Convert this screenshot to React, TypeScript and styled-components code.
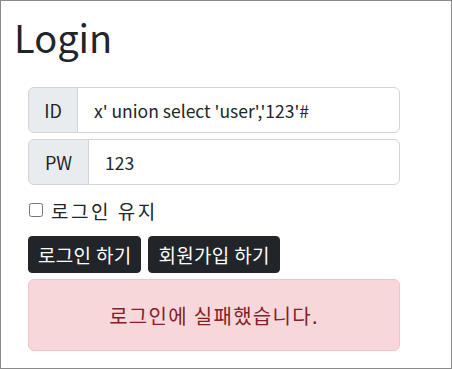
import styled, { createGlobalStyle } from 'styled-components';

const GlobalStyle = createGlobalStyle`
  html, body {
    margin: 0;
    padding: 0;
    background: #fff;
  }
  * {
    box-sizing: border-box;
  }
  body {
    font-family: 'Noto Sans CJK KR', 'Noto Sans', sans-serif;
    color: #212529;
  }
`;

const Frame = styled.div`
  width: 452px;
  height: 369px;
  border: 1px solid #8a8a8a;
  padding: 10px 51px 0 13px;
`;

const Title = styled.h1`
  margin: 0 0 24px;
  font-size: 38px;
  font-weight: 400;
  line-height: 52px;
`;

const Form = styled.form`
  display: flex;
  flex-direction: column;
  gap: 6px;
  padding-left: 14px;
`;

const InputGroup = styled.div`
  display: flex;
  height: 46px;
`;

const Addon = styled.span<{ $width: number }>`
  display: flex;
  align-items: center;
  justify-content: center;
  width: ${(p) => p.$width}px;
  flex-shrink: 0;
  background: #e9ecef;
  border: 1px solid #ced4da;
  border-radius: 6px 0 0 6px;
  font-size: 18px;
`;

const Input = styled.input`
  flex: 1;
  min-width: 0;
  margin-left: -1px;
  padding: 0 16px;
  border: 1px solid #ced4da;
  border-radius: 0 6px 6px 0;
  font-family: inherit;
  font-size: 17.5px;
  color: #212529;
  outline: none;
`;

const CheckRow = styled.label`
  display: flex;
  align-items: center;
  gap: 8px;
  margin-top: 4px;
  height: 30px;
  font-size: 19px;
  letter-spacing: 2.5px;
`;

const Check = styled.input`
  width: 14px;
  height: 14px;
  margin: 0 0 0 1px;
`;

const Buttons = styled.div`
  display: flex;
  gap: 7px;
  margin-top: 5px;
`;

const Button = styled.button`
  height: 37px;
  padding: 0 9px;
  background: #212529;
  color: #fff;
  border: 1px solid #212529;
  border-radius: 4px;
  font-family: inherit;
  font-size: 19px;
  letter-spacing: 0.3px;
`;

const Alert = styled.div`
  display: flex;
  align-items: center;
  justify-content: center;
  height: 72px;
  background: #f8d7da;
  border: 1px solid #f5c2c7;
  border-radius: 6px;
  color: #842029;
  font-size: 20px;
  letter-spacing: 1.3px;
`;

export default function App() {
  return (
    <>
      <GlobalStyle />
      <Frame>
        <Title>Login</Title>
        <Form onSubmit={(e) => e.preventDefault()}>
          <InputGroup>
            <Addon $width={50}>ID</Addon>
            <Input defaultValue="x' union select 'user','123'#" />
          </InputGroup>
          <InputGroup>
            <Addon $width={61}>PW</Addon>
            <Input defaultValue="123" />
          </InputGroup>
          <CheckRow>
            <Check type="checkbox" />
            로그인 유지
          </CheckRow>
          <Buttons>
            <Button type="button">로그인 하기</Button>
            <Button type="button">회원가입 하기</Button>
          </Buttons>
          <Alert>로그인에 실패했습니다.</Alert>
        </Form>
      </Frame>
    </>
  );
}
